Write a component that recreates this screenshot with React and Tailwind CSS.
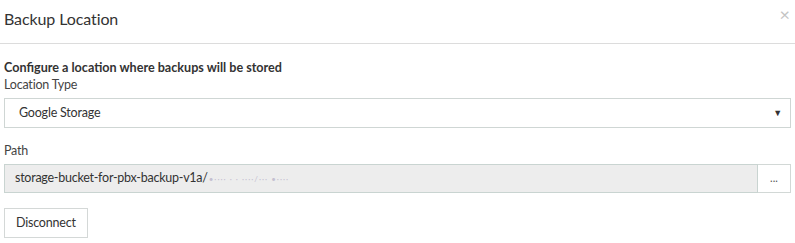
export default function App() {
  return (
    <div className="w-[795px] h-[243px] bg-white text-[#333] overflow-hidden" style={{ fontFamily: 'Lato, "Open Sans", sans-serif' }}>
      <div className="flex items-start justify-between h-[44px] border-b border-[#dcdcdc] pl-[4px] pr-[5px]">
        <h4 className="text-[16px] tracking-[-0.1px] leading-[20px] pt-[9px] text-[#333]">Backup Location</h4>
        <button className="text-[#c4c4c4] text-[18px] leading-none pt-[5px]">×</button>
      </div>
      <div className="pl-[4px] pr-[4px] pt-[15px]">
        <p className="text-[12.6px] font-bold leading-[17px]">Configure a location where backups will be stored</p>
        <label className="block text-[12.5px] tracking-[-0.2px] leading-[17px] text-[#444]">Location Type</label>
        <div className="mt-[5px] h-[30px] border border-[#cfd6d4] flex items-center justify-between pl-[14px] pr-[8px] text-[12.5px] tracking-[-0.2px]">
          <span>Google Storage</span>
          <span className="text-[9px] text-[#333]">▼</span>
        </div>
        <label className="block mt-[14px] text-[12.5px] tracking-[-0.2px] leading-[17px] text-[#444]">Path</label>
        <div className="mt-[5px] flex h-[29px]">
          <div className="flex-1 bg-[#ededed] border border-[#c9d4d1] flex items-center pl-[10px] text-[12.5px] tracking-[-0.25px]">
            <span>storage-bucket-for-pbx-backup-v1a/</span>
            <span className="text-[8px] text-[#c4c0d0] tracking-[1px] ml-[1px]">•···· · · ····/··· •····</span>
          </div>
          <button className="w-[33px] border border-l-0 border-[#d2d8d6] bg-white text-[11px] text-[#555] leading-none pb-[2px]">...</button>
        </div>
        <button className="mt-[15px] h-[30px] px-[11px] border border-[#d4d8d7] bg-white text-[12.5px] tracking-[-0.2px] text-[#333]">Disconnect</button>
      </div>
    </div>
  )
}
